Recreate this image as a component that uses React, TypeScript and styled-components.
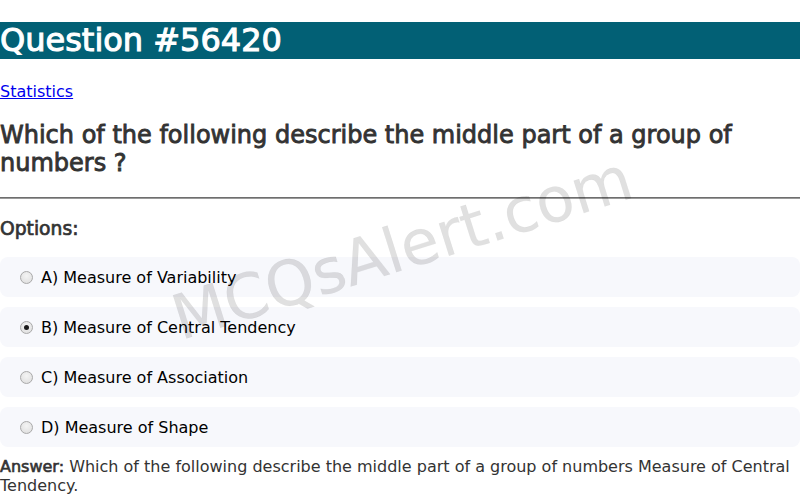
import * as React from "react";
import styled, { createGlobalStyle } from "styled-components";

const GlobalStyle = createGlobalStyle`
  html, body {
    margin: 0;
    padding: 0;
    background: #fff;
    font-family: "DejaVu Sans", Verdana, sans-serif;
  }
`;

const Page = styled.div`
  position: relative;
  width: 800px;
  overflow: hidden;
  color: #333;
`;

// headings use the regular face thickened a little (faux bold)
const TitleBar = styled.h1`
  margin: 22px 0 23.5px;
  background: #026075;
  color: #fff;
  font-size: 32px;
  font-weight: normal;
  -webkit-text-stroke: 1.05px #fff;
  line-height: 37px;
`;

const Category = styled.p`
  margin: 16px 0;
  font-size: 16px;
  line-height: 18.6px;

  a {
    color: #0000ee;
    text-decoration: underline;
  }
`;

const QuestionText = styled.h2`
  margin: 20.5px 0 19.5px;
  font-size: 24px;
  line-height: 27.9px;
  font-weight: normal;
  -webkit-text-stroke: 0.86px #333;
  color: #333;
`;

const Divider = styled.hr`
  margin: 0;
  height: 0;
  border: none;
  border-top: 1px solid #6e6e6e;
  border-bottom: 1px solid #9a9a9a;
`;

const SectionTitle = styled.h3`
  margin: 18.72px 0 17.8px;
  font-size: 18.72px;
  line-height: 21.8px;
  font-weight: normal;
  -webkit-text-stroke: 0.71px #333;
  color: #333;
`;

const OptionList = styled.div`
  display: flex;
  flex-direction: column;
  gap: 10px;
`;

const OptionRow = styled.label`
  display: flex;
  align-items: center;
  gap: 8px;
  height: 40px;
  box-sizing: border-box;
  padding-left: 20px;
  background: #f7f8fc;
  border-radius: 8px;
  font-size: 16px;
  color: #000;
`;

const Radio = styled.input`
  appearance: none;
  -webkit-appearance: none;
  margin: 0;
  width: 13px;
  height: 13px;
  box-sizing: border-box;
  border-radius: 50%;
  border: 1px solid #a9a9a9;
  background: radial-gradient(circle at 50% 35%, #f4f4f4 0%, #dcdcdc 100%);
  display: grid;
  place-items: center;

  &:checked::after {
    content: "";
    width: 5px;
    height: 5px;
    border-radius: 50%;
    background: #1a1a1a;
  }
`;

const AnswerText = styled.p`
  margin: 10px 0 0;
  font-size: 16px;
  line-height: 19px;
  color: #333;

  strong {
    font-weight: normal;
    -webkit-text-stroke: 0.62px #333;
  }
`;

const Watermark = styled.div`
  position: absolute;
  left: 402px;
  top: 248px;
  transform: translate(-50%, -50%) rotate(-17.5deg);
  font-size: 62px;
  color: rgba(0, 0, 0, 0.12);
  -webkit-text-stroke: 0.6px rgba(0, 0, 0, 0.04);
  white-space: nowrap;
  pointer-events: none;
`;

const options = [
  { key: "A", text: "Measure of Variability" },
  { key: "B", text: "Measure of Central Tendency" },
  { key: "C", text: "Measure of Association" },
  { key: "D", text: "Measure of Shape" },
];

export default function App() {
  return (
    <Page>
      <GlobalStyle />
      <TitleBar>Question #56420</TitleBar>
      <Category>
        <a href="#">Statistics</a>
      </Category>
      <QuestionText>
        Which of the following describe the middle part of a group of numbers ?
      </QuestionText>
      <Divider />
      <SectionTitle>Options:</SectionTitle>
      <Watermark>MCQsAlert.com</Watermark>
      <OptionList>
        {options.map((o) => (
          <OptionRow key={o.key}>
            <Radio
              type="radio"
              name="option"
              defaultChecked={o.key === "B"}
            />
            {o.key}) {o.text}
          </OptionRow>
        ))}
      </OptionList>
      <AnswerText>
        <strong>Answer:</strong> Which of the following describe the middle
        part of a group of numbers Measure of Central Tendency.
      </AnswerText>
    </Page>
  );
}
